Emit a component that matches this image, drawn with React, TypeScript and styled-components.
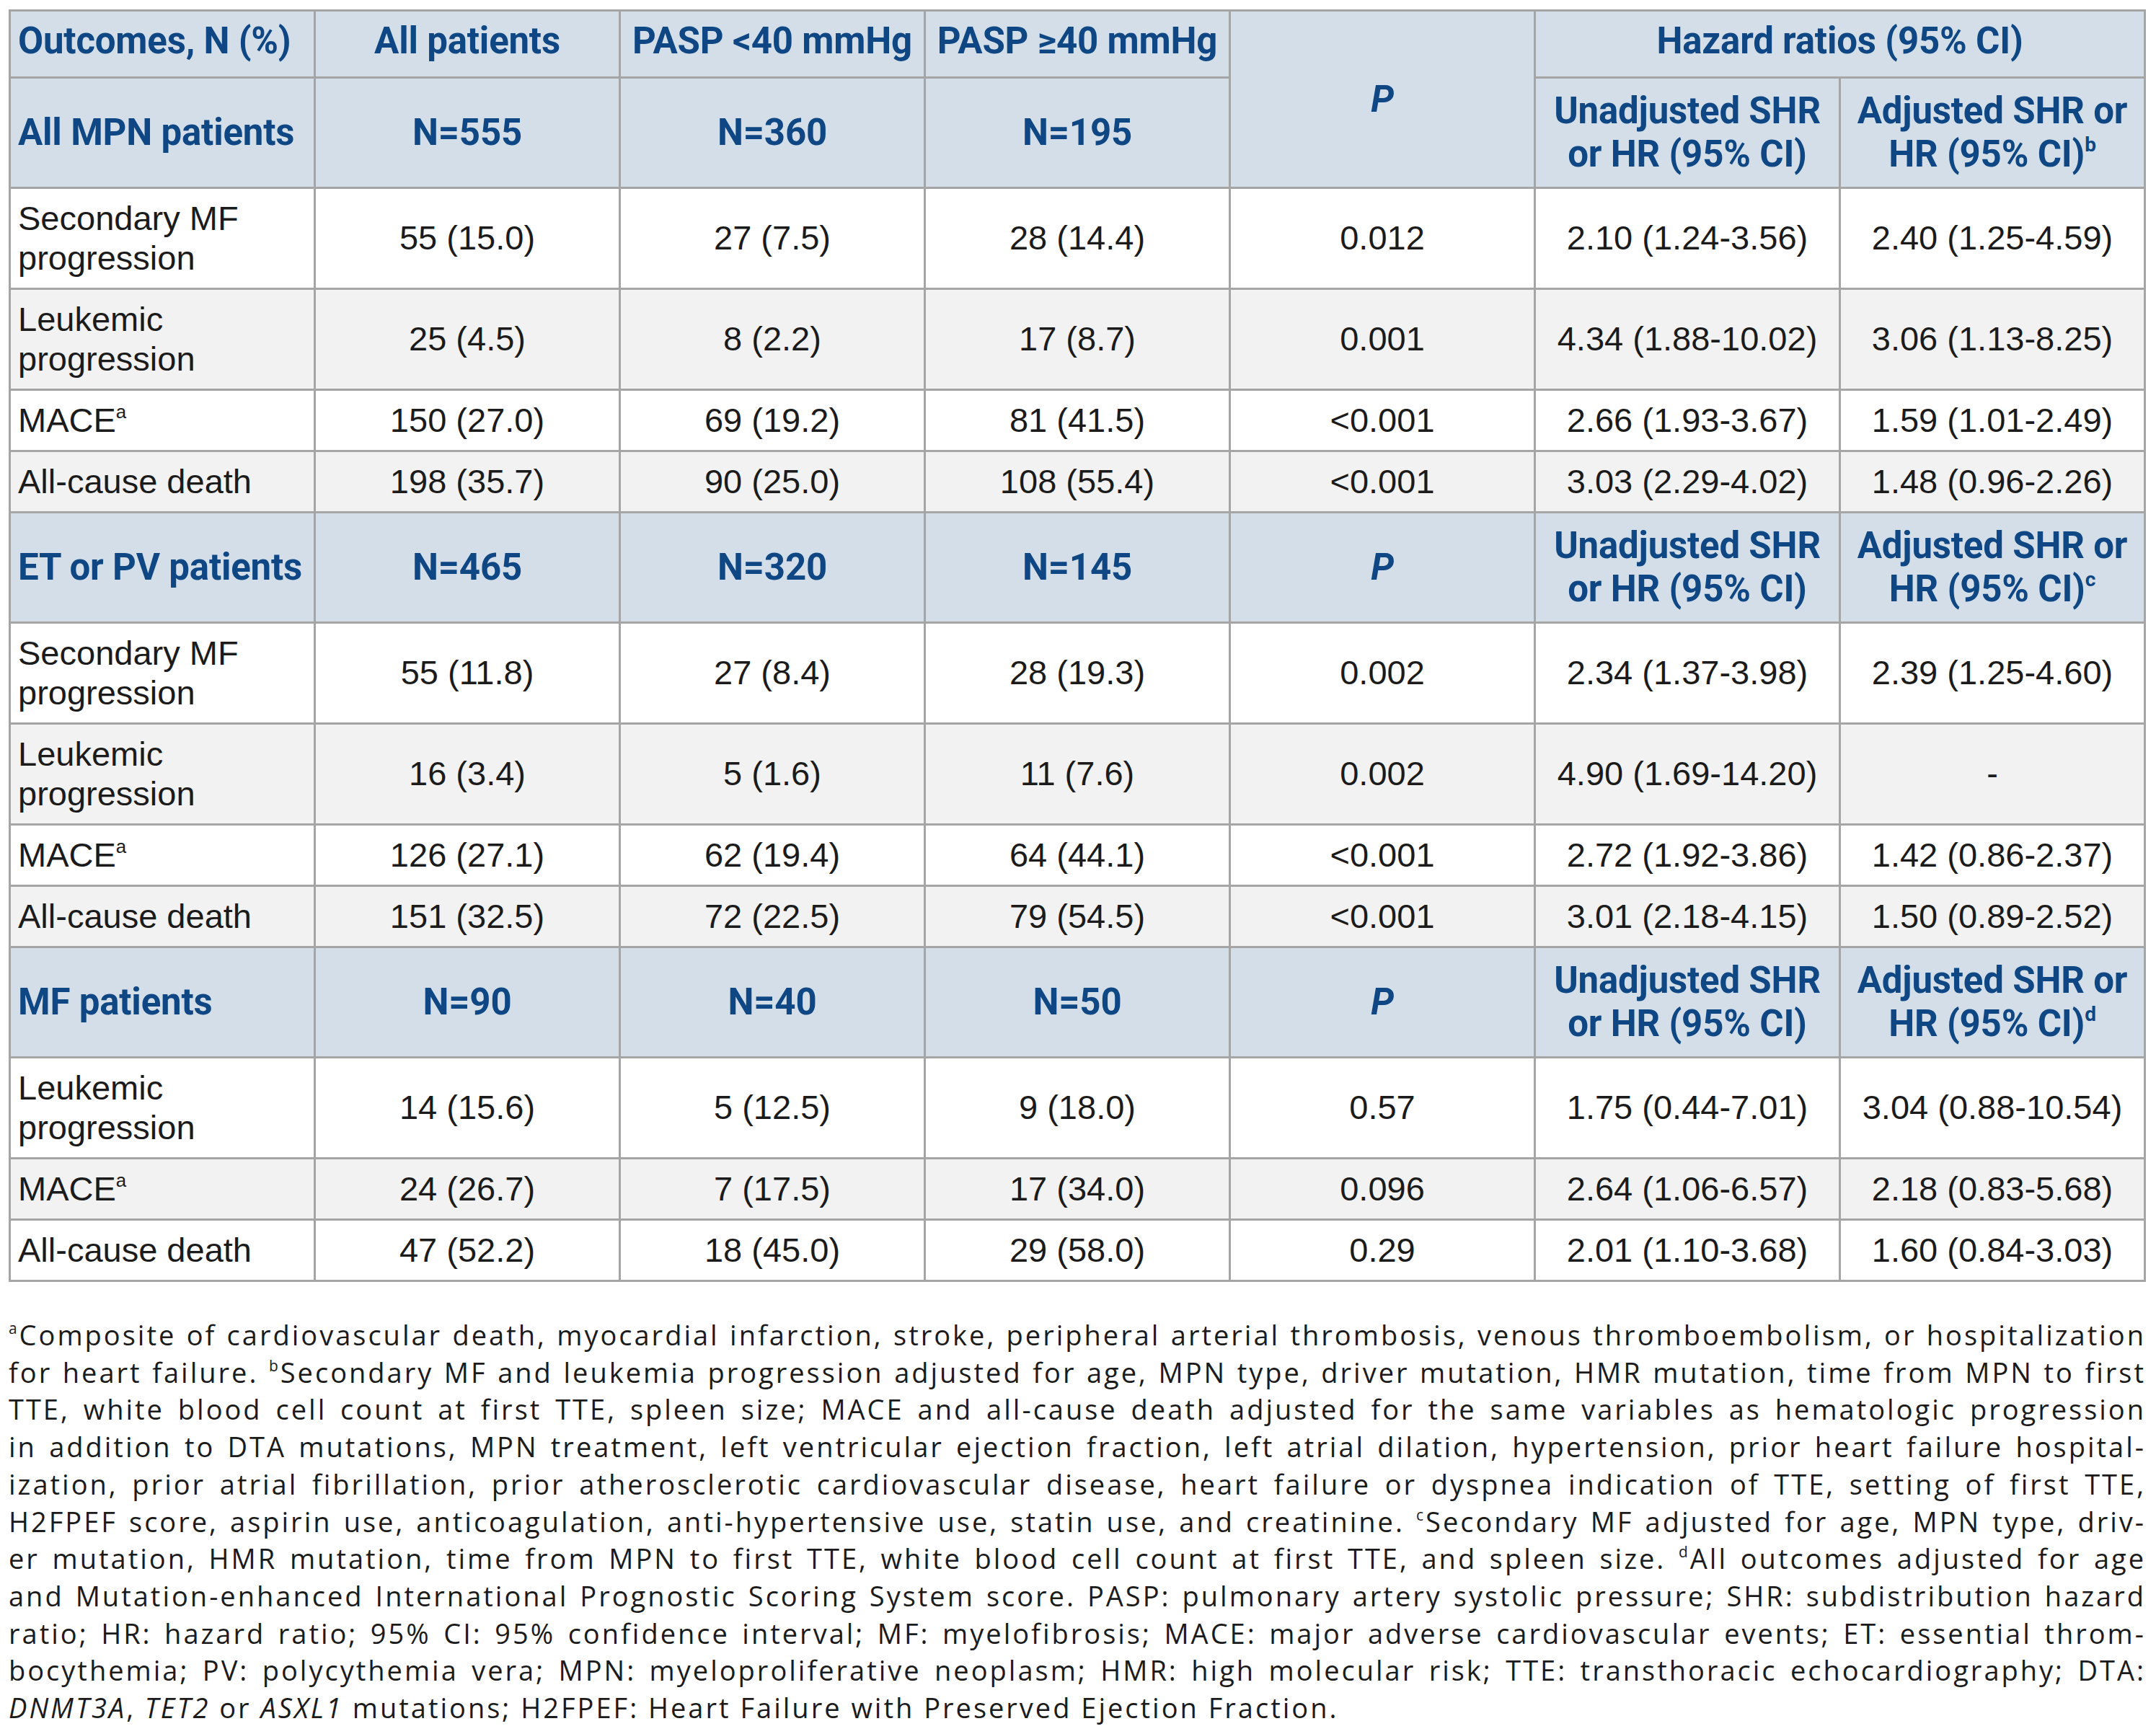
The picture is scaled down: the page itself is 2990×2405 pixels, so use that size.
import React from 'react';
import styled, { createGlobalStyle } from 'styled-components';

type Align = 'left' | 'center';
type Tone = 'white' | 'gray';

const GlobalStyle = createGlobalStyle`
  html, body {
    margin: 0;
    padding: 0;
    background: #ffffff;
  }
`;

const Page = styled.div`
  padding: 13px 0 40px 12px;
  width: 2964px;
`;

const Table = styled.table`
  width: 2964px;
  table-layout: fixed;
  border-collapse: collapse;
  border: 3px solid #a5a5a5;
`;

const HeadCell = styled.th<{ $align?: Align; $wrap?: boolean; $lift?: boolean }>`
  background: #d3dee8;
  color: #0e4783;
  font-family: Roboto, 'Noto Sans', sans-serif;
  font-weight: 700;
  font-size: 51px;
  line-height: 60px;
  letter-spacing: -0.2px;
  white-space: ${(p) => (p.$wrap ? 'normal' : 'nowrap')};
  text-align: ${(p) => p.$align || 'center'};
  vertical-align: middle;
  padding: ${(p) => (p.$lift ? '11px 4px 19px' : '15px 4px')};
  padding-left: ${(p) => (p.$align === 'left' ? '10px' : '4px')};
  border: 3px solid #a5a5a5;
`;

const BodyRow = styled.tr<{ $tone: Tone }>`
  background: ${(p) => (p.$tone === 'gray' ? '#f2f2f2' : '#ffffff')};
`;

const Cell = styled.td<{ $align?: Align }>`
  font-family: 'Liberation Sans', Arial, sans-serif;
  font-size: 47px;
  line-height: 55px;
  color: #1b1b1b;
  text-align: ${(p) => p.$align || 'center'};
  vertical-align: middle;
  padding: 12.5px 10px 14.5px;
  border: 3px solid #a5a5a5;
`;

const Sup = styled.sup`
  font-size: 0.55em;
  line-height: 0;
  vertical-align: 0.75em;
`;

const Em = styled.i`
  font-style: italic;
`;

const Notes = styled.div`
  margin-top: 48px;
  width: 2964px;
  font-family: 'Open Sans', 'Noto Sans', sans-serif;
  font-size: 38px;
  line-height: 51.7px;
  letter-spacing: 3px;
  color: #1b1b1b;
`;

const NoteLine = styled.div<{ $last?: boolean }>`
  text-align: ${(p) => (p.$last ? 'left' : 'justify')};
  text-align-last: ${(p) => (p.$last ? 'left' : 'justify')};
`;

type Row = {
  label: React.ReactNode;
  values: string[];
};

type Section = {
  title: string;
  counts: string[];
  note: string;
  rows: Row[];
};

const mace = (
  <>
    MACE<Sup>a</Sup>
  </>
);

const sections: Section[] = [
  {
    title: 'All MPN patients',
    counts: ['N=555', 'N=360', 'N=195'],
    note: 'b',
    rows: [
      { label: 'Secondary MF progression', values: ['55 (15.0)', '27 (7.5)', '28 (14.4)', '0.012', '2.10 (1.24-3.56)', '2.40 (1.25-4.59)'] },
      { label: 'Leukemic progression', values: ['25 (4.5)', '8 (2.2)', '17 (8.7)', '0.001', '4.34 (1.88-10.02)', '3.06 (1.13-8.25)'] },
      { label: mace, values: ['150 (27.0)', '69 (19.2)', '81 (41.5)', '<0.001', '2.66 (1.93-3.67)', '1.59 (1.01-2.49)'] },
      { label: 'All-cause death', values: ['198 (35.7)', '90 (25.0)', '108 (55.4)', '<0.001', '3.03 (2.29-4.02)', '1.48 (0.96-2.26)'] },
    ],
  },
  {
    title: 'ET or PV patients',
    counts: ['N=465', 'N=320', 'N=145'],
    note: 'c',
    rows: [
      { label: 'Secondary MF progression', values: ['55 (11.8)', '27 (8.4)', '28 (19.3)', '0.002', '2.34 (1.37-3.98)', '2.39 (1.25-4.60)'] },
      { label: 'Leukemic progression', values: ['16 (3.4)', '5 (1.6)', '11 (7.6)', '0.002', '4.90 (1.69-14.20)', '-'] },
      { label: mace, values: ['126 (27.1)', '62 (19.4)', '64 (44.1)', '<0.001', '2.72 (1.92-3.86)', '1.42 (0.86-2.37)'] },
      { label: 'All-cause death', values: ['151 (32.5)', '72 (22.5)', '79 (54.5)', '<0.001', '3.01 (2.18-4.15)', '1.50 (0.89-2.52)'] },
    ],
  },
  {
    title: 'MF patients',
    counts: ['N=90', 'N=40', 'N=50'],
    note: 'd',
    rows: [
      { label: 'Leukemic progression', values: ['14 (15.6)', '5 (12.5)', '9 (18.0)', '0.57', '1.75 (0.44-7.01)', '3.04 (0.88-10.54)'] },
      { label: mace, values: ['24 (26.7)', '7 (17.5)', '17 (34.0)', '0.096', '2.64 (1.06-6.57)', '2.18 (0.83-5.68)'] },
      { label: 'All-cause death', values: ['47 (52.2)', '18 (45.0)', '29 (58.0)', '0.29', '2.01 (1.10-3.68)', '1.60 (0.84-3.03)'] },
    ],
  },
];

// footnote keeps the line breaks of the printed table
const noteLines: React.ReactNode[] = [
  <><Sup>a</Sup>Composite of cardiovascular death, myocardial infarction, stroke, peripheral arterial thrombosis, venous thromboembolism, or hospitalization</>,
  <>for heart failure. <Sup>b</Sup>Secondary MF and leukemia progression adjusted for age, MPN type, driver mutation, HMR mutation, time from MPN to first</>,
  <>TTE, white blood cell count at first TTE, spleen size; MACE and all-cause death adjusted for the same variables as hematologic progression</>,
  <>in addition to DTA mutations, MPN treatment, left ventricular ejection fraction, left atrial dilation, hypertension, prior heart failure hospital-</>,
  <>ization, prior atrial fibrillation, prior atherosclerotic cardiovascular disease, heart failure or dyspnea indication of TTE, setting of first TTE,</>,
  <>H2FPEF score, aspirin use, anticoagulation, anti-hypertensive use, statin use, and creatinine. <Sup>c</Sup>Secondary MF adjusted for age, MPN type, driv-</>,
  <>er mutation, HMR mutation, time from MPN to first TTE, white blood cell count at first TTE, and spleen size. <Sup>d</Sup>All outcomes adjusted for age</>,
  <>and Mutation-enhanced International Prognostic Scoring System score. PASP: pulmonary artery systolic pressure; SHR: subdistribution hazard</>,
  <>ratio; HR: hazard ratio; 95% CI: 95% confidence interval; MF: myelofibrosis; MACE: major adverse cardiovascular events; ET: essential throm-</>,
  <>bocythemia; PV: polycythemia vera; MPN: myeloproliferative neoplasm; HMR: high molecular risk; TTE: transthoracic echocardiography; DTA:</>,
  <><Em>DNMT3A</Em>, <Em>TET2</Em> or <Em>ASXL1</Em> mutations; H2FPEF: Heart Failure with Preserved Ejection Fraction.</>,
];

export default function App() {
  return (
    <Page>
      <GlobalStyle />
      <Table>
        <tbody>
          <tr>
            <HeadCell $align="left" $lift>Outcomes, N (%)</HeadCell>
            <HeadCell $lift>All patients</HeadCell>
            <HeadCell $lift>PASP &lt;40 mmHg</HeadCell>
            <HeadCell $lift>PASP ≥40 mmHg</HeadCell>
            <HeadCell rowSpan={2}>
              <Em>P</Em>
            </HeadCell>
            <HeadCell colSpan={2} $lift>Hazard ratios (95% CI)</HeadCell>
          </tr>
          {sections.map((section, si) => (
            <React.Fragment key={section.title}>
              <tr>
                <HeadCell $align="left">{section.title}</HeadCell>
                {section.counts.map((n) => (
                  <HeadCell key={n}>{n}</HeadCell>
                ))}
                {si > 0 && (
                  <HeadCell>
                    <Em>P</Em>
                  </HeadCell>
                )}
                <HeadCell $wrap>Unadjusted SHR or HR (95% CI)</HeadCell>
                <HeadCell $wrap>
                  Adjusted SHR or HR (95% CI)<Sup>{section.note}</Sup>
                </HeadCell>
              </tr>
              {section.rows.map((row, ri) => (
                <BodyRow key={ri} $tone={ri % 2 === 0 ? 'white' : 'gray'}>
                  <Cell $align="left">{row.label}</Cell>
                  {row.values.map((v, vi) => (
                    <Cell key={vi}>{v}</Cell>
                  ))}
                </BodyRow>
              ))}
            </React.Fragment>
          ))}
        </tbody>
      </Table>
      <Notes>
        {noteLines.map((line, i) => (
          <NoteLine key={i} $last={i === noteLines.length - 1}>
            {line}
          </NoteLine>
        ))}
      </Notes>
    </Page>
  );
}
